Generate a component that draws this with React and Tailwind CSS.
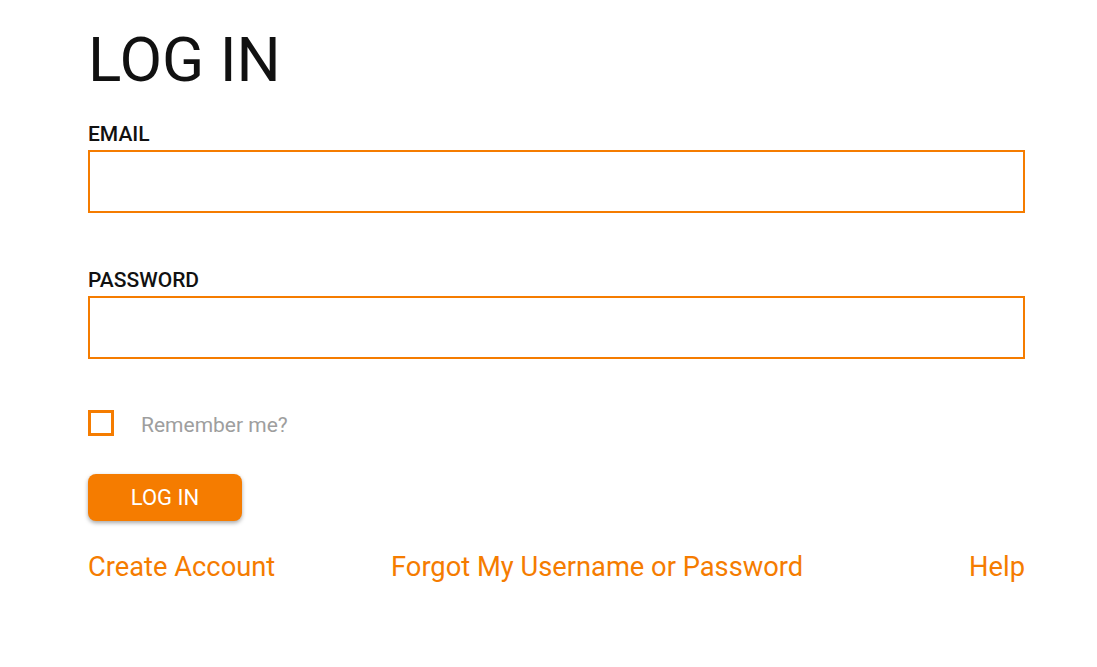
import React, { useState } from 'react';

function App() {
  const [email, setEmail] = useState("");
  const [password, setPassword] = useState("");
  const [remember, setRemember] = useState(false);

  return (
    <div className="min-h-screen bg-white font-['Roboto',sans-serif] text-[#111111]">
      <div className="ml-[88px] w-[937px] pt-[29px]">
        <h1 className="text-[62px] leading-[62px] font-normal mb-[33px]">LOG IN</h1>

        <label className="block text-[21px] leading-[21px] font-medium mb-[5px]">EMAIL</label>
        <input
          type="email"
          value={email}
          onChange={e => setEmail(e.target.value)}
          className="block w-full h-[63px] border-2 border-[#f57c00] outline-none px-3 text-[20px]"
        />

        <label className="block text-[21px] leading-[21px] font-medium mt-[57px] mb-[5px]">PASSWORD</label>
        <input
          type="password"
          value={password}
          onChange={e => setPassword(e.target.value)}
          className="block w-full h-[63px] border-2 border-[#f57c00] outline-none px-3 text-[20px]"
        />

        <div className="flex items-start mt-[51px]">
          <button
            onClick={() => setRemember(!remember)}
            className="w-[26px] h-[26px] border-[3px] border-[#f57c00] bg-white flex items-center justify-center"
          >
            {remember && <span className="w-3 h-3 bg-[#f57c00]" />}
          </button>
          <span className="ml-[27px] mt-[5px] text-[21px] leading-[21px] text-[#9e9e9e]">Remember me?</span>
        </div>

        <button className="mt-[38px] w-[154px] h-[47px] rounded-lg bg-[#f57c00] text-white text-[22px] font-normal shadow-[0_2px_4px_rgba(0,0,0,0.35)]">
          LOG IN
        </button>

        {/* links */}
        <div className="flex items-start mt-[33px] text-[27.3px] leading-[27px] text-[#f57c00]">
          <a href="#" className="w-[303px]">Create Account</a>
          <a href="#">Forgot My Username or Password</a>
          <a href="#" className="ml-auto">Help</a>
        </div>
      </div>
    </div>
  );
}

export default App;
